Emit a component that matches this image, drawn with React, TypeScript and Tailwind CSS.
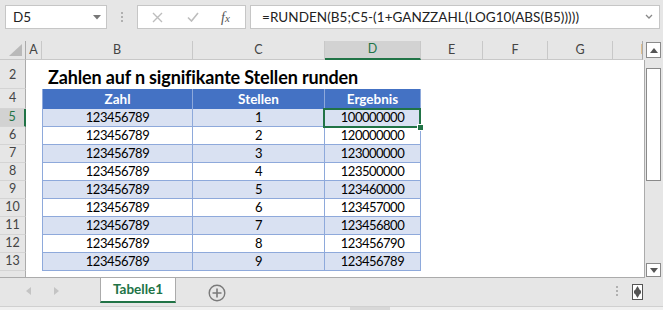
import React from "react";

const rows = [
  ["123456789", "1", "100000000"],
  ["123456789", "2", "120000000"],
  ["123456789", "3", "123000000"],
  ["123456789", "4", "123500000"],
  ["123456789", "5", "123460000"],
  ["123456789", "6", "123457000"],
  ["123456789", "7", "123456800"],
  ["123456789", "8", "123456790"],
  ["123456789", "9", "123456789"],
];

const font = { fontFamily: "Lato, 'Open Sans', sans-serif" };

function RowHead({ label, h, active }: { label: string; h: string; active?: boolean }) {
  return (
    <div
      className={
        "w-[26px] shrink-0 flex items-center justify-center text-[12.5px] border-b border-[#d4d4d4] " +
        h +
        (active
          ? " bg-[#d2d2d2] text-[#217346] border-r-2 border-r-[#217346]"
          : " bg-[#e6e6e6] text-[#444] border-r border-r-[#ababab]")
      }
    >
      {label}
    </div>
  );
}

export default function App() {
  return (
    <div className="w-[663px] h-[310px] bg-[#e6e6e6] flex flex-col overflow-hidden text-[#111]" style={font}>
      {/* Formula bar */}
      <div className="h-[41px] shrink-0 flex items-start pt-[5px] pl-[5px]">
        <div className="w-[102px] h-[24px] bg-white border border-[#c6c6c6] flex items-center pl-[7px] pr-[5px] text-[13.5px] text-[#222]">
          <span className="flex-1">D5</span>
          <svg width="8" height="5" viewBox="0 0 8 5">
            <path d="M0 0 L8 0 L4 4.5 Z" fill="#777" />
          </svg>
        </div>
        <div className="w-[30px] h-[24px] flex flex-col items-center justify-center gap-[2px]">
          <div className="w-[2px] h-[2px] bg-[#b0b0b0]" />
          <div className="w-[2px] h-[2px] bg-[#b0b0b0]" />
          <div className="w-[2px] h-[2px] bg-[#b0b0b0]" />
        </div>
        <div className="w-[109px] h-[24px] bg-white border border-[#c6c6c6] flex items-center">
          <svg className="ml-[14px]" width="11" height="11" viewBox="0 0 11 11">
            <path d="M1 1 L10 10 M10 1 L1 10" stroke="#bdbdbd" strokeWidth="1.4" />
          </svg>
          <svg className="ml-[24px]" width="12" height="10" viewBox="0 0 12 10">
            <path d="M1 5.5 L4.5 9 L11 1" stroke="#bdbdbd" strokeWidth="1.6" fill="none" />
          </svg>
          <span
            className="ml-[22px] text-[14px] italic text-[#555]"
            style={{ fontFamily: "'Liberation Serif', serif" }}
          >
            f<span className="text-[11px]">x</span>
          </span>
        </div>
        <div className="ml-[4px] w-[410px] h-[24px] bg-white border border-[#c6c6c6] flex items-center pl-[11px] pr-[6px] text-[13.5px] text-[#222]">
          <span className="flex-1 tracking-[0.05px]">=RUNDEN(B5;C5-(1+GANZZAHL(LOG10(ABS(B5)))))</span>
          <svg width="8" height="6" viewBox="0 0 8 6">
            <path d="M1 1 L4 4 L7 1" stroke="#888" strokeWidth="1.3" fill="none" />
          </svg>
        </div>
      </div>

      {/* Grid area */}
      <div className="h-[237px] shrink-0 flex">
        <div className="w-[645px] shrink-0 flex flex-col overflow-hidden">
          {/* Column headers */}
          <div className="h-[19px] shrink-0 flex text-[12.5px] text-[#444]">
            <div className="w-[26px] shrink-0 relative border-r border-[#ababab] border-b border-b-[#c8c8c8]">
              <svg className="absolute left-[9px] top-[3px]" width="13" height="12" viewBox="0 0 13 12">
                <path d="M13 0 L13 12 L0 12 Z" fill="#b9b9b9" />
              </svg>
            </div>
            <div className="w-[16px] shrink-0 flex items-center justify-center border-r border-[#c8c8c8] border-b">A</div>
            <div className="w-[151px] shrink-0 flex items-center justify-center border-r border-[#c8c8c8] border-b">B</div>
            <div className="w-[132px] shrink-0 flex items-center justify-center border-r border-[#c8c8c8] border-b">C</div>
            <div className="w-[96px] shrink-0 flex items-center justify-center border-r border-[#c8c8c8] bg-[#d2d2d2] text-[#217346] border-b-2 border-b-[#217346]">D</div>
            <div className="w-[62px] shrink-0 flex items-center justify-center border-r border-[#c8c8c8] border-b">E</div>
            <div className="w-[65px] shrink-0 flex items-center justify-center border-r border-[#c8c8c8] border-b">F</div>
            <div className="w-[65px] shrink-0 flex items-center justify-center border-r border-[#c8c8c8] border-b">G</div>
            <div className="w-[30px] shrink-0 overflow-hidden border-b border-[#c8c8c8] border-r border-r-[#ababab]">
              <div className="w-[65px] h-full flex items-center justify-center text-[#5a1a1a]">H</div>
            </div>
          </div>

          {/* Row 2 */}
          <div className="h-[29px] shrink-0 flex">
            <RowHead label="2" h="h-[29px] pt-[3px]" />
            <div className="flex-1 bg-white border-r border-[#ababab] flex items-end pl-[22px] pb-[1px]">
              <span className="text-[18px] font-bold tracking-[-0.15px] leading-[22px] whitespace-nowrap text-black">
                Zahlen auf n signifikante Stellen runden
              </span>
            </div>
          </div>

          {/* Row 4 header */}
          <div className="h-[20px] shrink-0 flex">
            <RowHead label="4" h="h-[20px]" />
            <div className="flex-1 flex bg-white border-r border-[#ababab]">
              <div className="w-[16px] shrink-0" />
              <div className="w-[151px] shrink-0 bg-[#4472c4] text-white font-bold text-[13.5px] flex items-center justify-center border-l border-r border-[#8ea9db]">Zahl</div>
              <div className="w-[132px] shrink-0 bg-[#4472c4] text-white font-bold text-[13.5px] flex items-center justify-center border-r border-[#8ea9db]">Stellen</div>
              <div className="w-[96px] shrink-0 bg-[#4472c4] text-white font-bold text-[13.5px] flex items-center justify-center border-r border-[#8ea9db]">Ergebnis</div>
            </div>
          </div>

          {rows.map((r, i) => {
            const band = i % 2 === 0 ? "bg-[#d9e1f2]" : "bg-white";
            const active = i === 0;
            return (
              <div key={i} className={"h-[18px] shrink-0 flex" + (active ? " relative z-10" : "")}>
                <RowHead label={String(i + 5)} h="h-[18px]" active={active} />
                <div className="flex-1 flex bg-white border-r border-[#ababab] text-[13px] tracking-[-0.5px] text-black">
                  <div className="w-[16px] shrink-0" />
                  <div className={"w-[151px] shrink-0 flex items-center justify-center border-l border-r border-b border-[#8ea9db] " + band}>{r[0]}</div>
                  <div className={"w-[132px] shrink-0 flex items-center justify-center border-r border-b border-[#8ea9db] " + band}>{r[1]}</div>
                  <div className={"w-[96px] shrink-0 relative flex items-center justify-center border-r border-b border-[#8ea9db] " + band}>
                    {r[2]}
                    {active && (
                      <>
                        <div className="absolute left-[-2px] top-[-1px] right-[-1px] bottom-[-2px] border-2 border-[#217346]" />
                        <div className="absolute right-[-4px] bottom-[-5px] w-[7px] h-[7px] bg-[#217346] border border-white" />
                      </>
                    )}
                  </div>
                </div>
              </div>
            );
          })}

          {/* Row 14 partial */}
          <div className="flex-1 flex border-b border-[#ababab]">
            <div className="w-[26px] shrink-0 bg-[#e6e6e6] border-r border-[#ababab]" />
            <div className="flex-1 bg-white border-r border-[#ababab]" />
          </div>
        </div>

        {/* Vertical scrollbar */}
        <div className="flex-1 flex flex-col items-center pt-[1px] pr-[1px]">
          <div className="w-[15px] h-[16px] border border-[#8a8a8a] bg-white flex items-center justify-center">
            <svg width="8" height="5" viewBox="0 0 8 5">
              <path d="M0 5 L8 5 L4 0 Z" fill="#555" />
            </svg>
          </div>
          <div className="mt-[10px] w-[15px] h-[113px] border border-[#8a8a8a] bg-white" />
          <div className="flex-1" />
          <div className="w-[15px] h-[14px] mb-[1px] border border-[#8a8a8a] bg-white flex items-center justify-center">
            <svg width="8" height="5" viewBox="0 0 8 5">
              <path d="M0 0 L8 0 L4 5 Z" fill="#555" />
            </svg>
          </div>
        </div>
      </div>

      {/* Sheet tabs */}
      <div className="h-[28px] shrink-0 flex items-start">
        <div className="w-[100px] h-[26px] shrink-0 flex items-center">
          <svg className="ml-[26px]" width="5" height="8" viewBox="0 0 5 8">
            <path d="M5 0 L5 8 L0 4 Z" fill="#c4c4c4" />
          </svg>
          <svg className="ml-[23px]" width="5" height="8" viewBox="0 0 5 8">
            <path d="M0 0 L0 8 L5 4 Z" fill="#c4c4c4" />
          </svg>
        </div>
        <div className="w-[76px] h-[25px] shrink-0 bg-white border-l border-r border-[#ababab] border-b-2 border-b-[#217346] flex items-center justify-center text-[13.5px] font-bold text-[#217346]">
          Tabelle1
        </div>
        <div className="ml-[32px] mt-[6px]">
          <svg width="18" height="18" viewBox="0 0 18 18">
            <circle cx="9" cy="9" r="7.8" stroke="#7a7a7a" strokeWidth="1.4" fill="none" />
            <path d="M9 4.5 L9 13.5 M4.5 9 L13.5 9" stroke="#7a7a7a" strokeWidth="1.6" />
          </svg>
        </div>
        <div className="flex-1" />
        <div className="mt-[8px] mr-[14px] flex flex-col gap-[2px]">
          <div className="w-[2px] h-[2px] bg-[#b0b0b0]" />
          <div className="w-[2px] h-[2px] bg-[#b0b0b0]" />
          <div className="w-[2px] h-[2px] bg-[#b0b0b0]" />
        </div>
        <div className="mt-[6px] mr-[20px]">
          <svg width="11" height="16" viewBox="0 0 11 16">
            <rect x="0.5" y="0.5" width="10" height="15" fill="#fff" stroke="#555" />
            <path d="M5.5 2 L9 8 L5.5 14 L2 8 Z" fill="#555" />
            <rect x="2" y="6.5" width="7" height="3" fill="#555" />
          </svg>
        </div>
      </div>

      {/* Bottom strip */}
      <div className="flex-1 bg-[#f0f0f0] border-t border-[#d0d0d0] flex">
        <div className="ml-[350px] w-[40px] bg-[#d8d8d8]" />
      </div>
    </div>
  );
}
